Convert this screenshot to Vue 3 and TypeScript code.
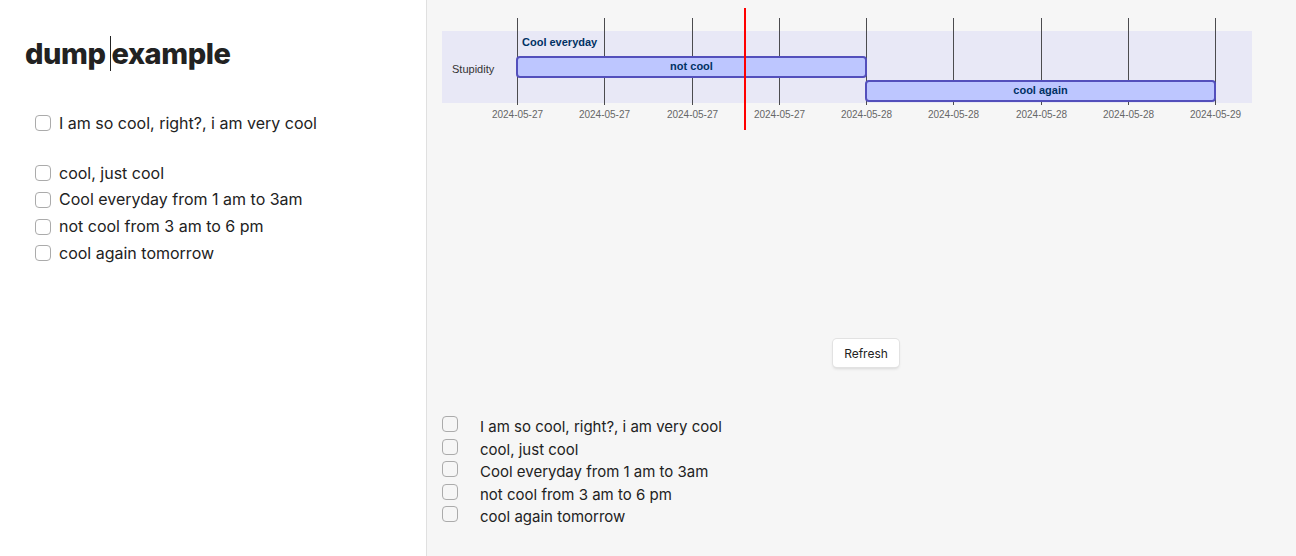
<script setup lang="ts">
import { ref } from 'vue'

interface Task {
  id: string
  text: string
  done: boolean
}

interface Bar {
  label: string
  start: number
  end: number
  row: number
}

const tasks = ref<Task[]>([
  { id: 'so-cool', text: 'I am so cool, right?, i am very cool', done: false },
  { id: 'just-cool', text: 'cool, just cool', done: false },
  { id: 'everyday', text: 'Cool everyday from 1 am to 3am', done: false },
  { id: 'not-cool', text: 'not cool from 3 am to 6 pm', done: false },
  { id: 'tomorrow', text: 'cool again tomorrow', done: false },
])

const groups = [[0], [1, 2, 3, 4]]

// Timeline geometry, in chart units
const originX = 75
const plotWidth = 698
const rowHeight = 24

const dates = [
  '2024-05-27', '2024-05-27', '2024-05-27', '2024-05-27',
  '2024-05-28', '2024-05-28', '2024-05-28', '2024-05-28',
  '2024-05-29',
]
const ticks = dates.map((date, i) => ({
  date,
  x: originX + Math.round((plotWidth * i) / (dates.length - 1)) + 0.5,
}))

const bars: Bar[] = [
  { label: 'not cool', start: 0, end: 0.5, row: 1 },
  { label: 'cool again', start: 0.5, end: 1, row: 2 },
]
const barX = (bar: Bar) => originX + bar.start * plotWidth
const barWidth = (bar: Bar) => (bar.end - bar.start) * plotWidth
const barY = (bar: Bar) => 25 + bar.row * rowHeight

const refresh = () => {
  tasks.value = tasks.value.map((task) => ({ ...task }))
}
</script>

<template>
  <div class="workspace">
    <main class="note">
      <h1 class="title">dump <span class="caret"></span>example</h1>
      <ul v-for="(group, g) in groups" :key="g" class="note-list">
        <li v-for="i in group" :key="tasks[i].id">
          <input :id="`note-${tasks[i].id}`" v-model="tasks[i].done" class="box" type="checkbox" />
          <label :for="`note-${tasks[i].id}`">{{ tasks[i].text }}</label>
        </li>
      </ul>
    </main>

    <aside class="side">
      <svg class="chart" viewBox="0 0 810 122" role="img" aria-label="Task timeline">
        <rect class="section" x="0" y="23" width="810" height="72" />
        <g v-for="tick in ticks" :key="tick.x">
          <line class="grid-line" :x1="tick.x" :x2="tick.x" y1="10" y2="97" />
          <text class="date" :x="tick.x" y="110">{{ tick.date }}</text>
        </g>
        <g v-for="bar in bars" :key="bar.label">
          <rect class="bar" :x="barX(bar)" :y="barY(bar)" :width="barWidth(bar)" height="20" rx="3" />
          <text class="bar-label centered" :x="barX(bar) + barWidth(bar) / 2" :y="barY(bar) + 13">{{ bar.label }}</text>
        </g>
        <text class="bar-label" x="80" y="38">Cool everyday</text>
        <text class="section-label" x="10" y="65">Stupidity</text>
        <line class="today" x1="303" x2="303" y1="0" y2="122" />
      </svg>

      <button class="refresh" type="button" @click="refresh">Refresh</button>

      <ul class="side-list">
        <li v-for="task in tasks" :key="task.id">
          <input :id="`side-${task.id}`" v-model="task.done" class="box" type="checkbox" />
          <label :for="`side-${task.id}`">{{ task.text }}</label>
        </li>
      </ul>
    </aside>
  </div>
</template>

<style>
body {
  margin: 0;
}
</style>

<style scoped>
.workspace {
  display: grid;
  grid-template-columns: 427fr 869fr;
  min-height: 100vh;
  color: #222;
  background: #fff;
  font-family: Inter, "Liberation Sans", sans-serif;
}

.note {
  box-sizing: border-box;
  padding: 36px 25px;
  border-right: 1px solid #e0e0e0;
}

.title {
  margin: 0 0 38px;
  font-size: 29px;
  font-weight: 800;
  line-height: 36px;
  letter-spacing: -0.015em;
}

.caret {
  position: relative;
}

.caret::before {
  content: "";
  position: absolute;
  top: 0;
  left: -1px;
  width: 1px;
  height: 35px;
  background: #222;
}

ul {
  margin: 0;
  padding: 0;
  list-style: none;
}

li {
  display: flex;
}

.note-list {
  margin-bottom: 23px;
  padding-left: 10px;
  font-size: 16px;
  line-height: 1.67;
}

.note-list li {
  align-items: center;
  gap: 8px;
}

.box {
  appearance: none;
  flex: none;
  box-sizing: border-box;
  width: 16px;
  height: 16px;
  margin: 0;
  border: 1px solid #ababab;
  border-radius: 4px;
}

.box:checked {
  border-color: #534fbc;
  background: #534fbc;
}

.side {
  display: flex;
  flex-direction: column;
  padding: 8px 44px 28px 15px;
  background: #f6f6f6;
}

.chart {
  display: block;
  width: 100%;
  font-family: "Liberation Sans", Arial, sans-serif;
}

.section {
  fill: #e8e8f6;
}

.grid-line {
  stroke: #4b4b4f;
  stroke-width: 1px;
}

.date {
  fill: #666;
  font-size: 10px;
  text-anchor: middle;
}

.bar {
  fill: #bdc6ff;
  stroke: #534fbc;
  stroke-width: 2px;
}

.bar-label {
  fill: #003163;
  font-size: 11px;
  font-weight: 700;
}

.centered {
  text-anchor: middle;
}

.section-label {
  fill: #333;
  font-size: 11px;
}

.today {
  stroke: #f00;
  stroke-width: 2px;
}

.refresh {
  align-self: center;
  height: 28px;
  margin: 209px 0 46px 38px;
  padding: 0 11px;
  border: 0;
  border-radius: 4px;
  color: #222;
  background: #fff;
  box-shadow: 0 0 0 1px #e2e2e2, 0 2px 3px rgba(0, 0, 0, 0.12);
  font-family: inherit;
  font-size: 12px;
}

.side-list {
  font-size: 15px;
  line-height: 1.5;
}

.side-list li {
  gap: 22px;
}

.side-list .box {
  margin-top: 3px;
}

.side-list label {
  padding-top: 3px;
  margin-bottom: -3px;
}
</style>
